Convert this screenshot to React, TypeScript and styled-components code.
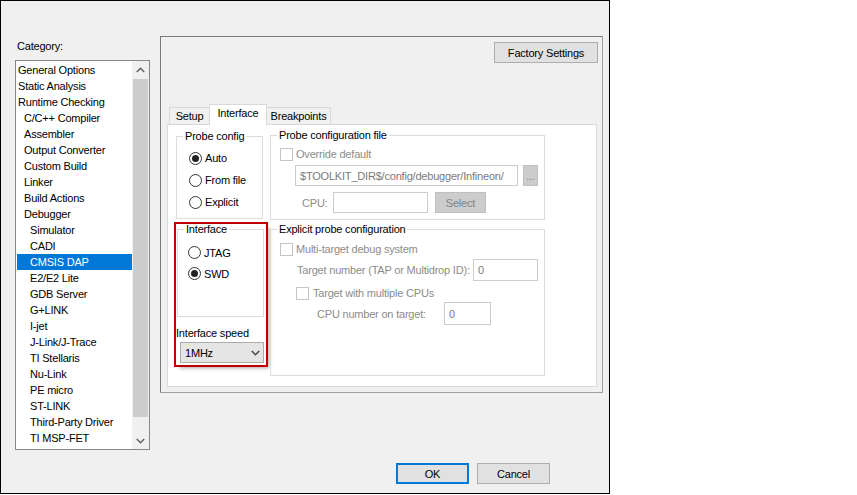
import React from 'react';
import styled, { createGlobalStyle } from 'styled-components';

const GlobalStyle = createGlobalStyle`
  html, body { margin: 0; padding: 0; background: #fff; }
  body {
    font-family: "Liberation Sans", Arial, sans-serif;
    font-size: 11px;
    letter-spacing: -0.2px;
    color: #000;
  }
`;

const Dialog = styled.div`
  width: 610px;
  height: 494px;
  box-sizing: border-box;
  border: 1px solid #000;
  background: #f0f0f0;
  display: flex;
  flex-direction: column;
`;

const TopRow = styled.div`
  display: flex;
  align-items: flex-start;
  gap: 10px;
  padding-left: 14px;
  height: 449px;
`;

const CategoryCol = styled.div`
  margin-top: 37px;
  width: 135px;
  display: flex;
  flex-direction: column;
`;

const CategoryLabel = styled.div`
  line-height: 16px;
  padding-left: 2px;
  margin-bottom: 6px;
`;

const ListBox = styled.div`
  width: 135px;
  height: 390px;
  box-sizing: border-box;
  border: 1px solid #828790;
  background: #fff;
  display: flex;
`;

const Items = styled.ul`
  list-style: none;
  margin: 0;
  padding: 1px 0 0 1px;
  flex: 1;
`;

const Item = styled.li<{ $level: number; $selected?: boolean }>`
  height: 16px;
  line-height: 16px;
  white-space: nowrap;
  padding-left: ${p => 1 + p.$level * 6}px;
  background: ${p => (p.$selected ? '#0078d7' : 'transparent')};
  color: ${p => (p.$selected ? '#fff' : '#000')};
`;

const ScrollBar = styled.div`
  width: 17px;
  background: #f0f0f0;
  display: flex;
  flex-direction: column;
`;

const ScrollArrow = styled.div`
  height: 17px;
  display: flex;
  align-items: center;
  justify-content: center;
`;

const ScrollThumb = styled.div`
  margin: 1px 1px 0;
  height: 338px;
  background: #cdcdcd;
`;

const ScrollTrack = styled.div`
  flex: 1;
`;

const Frame = styled.div`
  margin-top: 35px;
  width: 443px;
  height: 357px;
  box-sizing: border-box;
  border: 1px solid #a0a0a0;
  border-color: #7a7a7a #a0a0a0 #a0a0a0 #7a7a7a;
  display: flex;
  flex-direction: column;
  padding: 5px 4px 0 6px;
`;

const ButtonRow = styled.div`
  display: flex;
  justify-content: flex-end;
`;

const PushButton = styled.button<{ $w: number; $default?: boolean }>`
  width: ${p => p.$w}px;
  height: 21px;
  box-sizing: border-box;
  margin: 0;
  padding: 0;
  background: #e1e1e1;
  border: ${p => (p.$default ? '2px solid #0078d7' : '1px solid #adadad')};
  font-family: "Liberation Sans", Arial, sans-serif;
  font-size: 11px;
  letter-spacing: -0.2px;
  color: #000;
`;

const TabStrip = styled.div`
  margin-top: 41px;
  height: 20px;
  padding-left: 2px;
  display: flex;
  align-items: flex-end;
`;

const Tab = styled.div<{ $w: number; $active?: boolean }>`
  width: ${p => p.$w}px;
  height: ${p => (p.$active ? 21 : 17)}px;
  margin-bottom: ${p => (p.$active ? -1 : 0)}px;
  box-sizing: border-box;
  border: 1px solid #d9d9d9;
  border-bottom: none;
  background: ${p => (p.$active ? '#fff' : '#f0f0f0')};
  position: relative;
  z-index: ${p => (p.$active ? 1 : 0)};
  text-align: center;
  white-space: nowrap;
  line-height: ${p => (p.$active ? 17 : 16)}px;
  & + & { margin-left: -1px; }
`;

const TabPanel = styled.div`
  width: 430px;
  height: 263px;
  box-sizing: border-box;
  border: 1px solid #d9d9d9;
  background: #fff;
  display: grid;
  grid-template-columns: 90px 275px;
  column-gap: 4px;
  align-items: start;
  padding: 3px 0 0 8px;
`;

const Column = styled.div<{ $top?: number }>`
  display: flex;
  flex-direction: column;
  margin-top: ${p => p.$top ?? 0}px;
`;

const Group = styled.fieldset<{ $w: number; $h: number; $top?: number; $left?: number }>`
  margin: ${p => p.$top ?? 0}px 0 0 ${p => p.$left ?? 0}px;
  padding: 0;
  min-width: 0;
  width: ${p => p.$w}px;
  height: ${p => p.$h}px;
  box-sizing: border-box;
  border: 1px solid #dcdcdc;
`;

const Legend = styled.legend`
  margin-left: 6px;
  padding: 0 2px;
  line-height: 14px;
  font-size: 11px;
`;

const GroupBody = styled.div<{ $pt: number; $pl: number }>`
  padding: ${p => p.$pt}px 0 0 ${p => p.$pl}px;
  display: flex;
  flex-direction: column;
`;

const RadioRow = styled.div<{ $h: number }>`
  height: ${p => p.$h}px;
  display: flex;
  align-items: center;
  gap: 3px;
`;

const RadioDot = styled.span<{ $checked?: boolean }>`
  width: 13px;
  height: 13px;
  box-sizing: border-box;
  border: 1px solid #333;
  border-radius: 50%;
  background: #fff;
  display: flex;
  align-items: center;
  justify-content: center;
  &::after {
    content: '';
    width: 7px;
    height: 7px;
    border-radius: 50%;
    background: #222;
    display: ${p => (p.$checked ? 'block' : 'none')};
  }
`;

const Highlight = styled.div`
  margin-top: 5px;
  width: 90px;
  height: 141px;
  outline: 2px solid #c00000;
  box-shadow: 3px 3px 4px rgba(0, 0, 0, 0.35);
  display: flex;
  flex-direction: column;
`;

const FieldLabel = styled.div<{ $top?: number }>`
  margin-top: ${p => p.$top ?? 0}px;
  line-height: 14px;
`;

const Combo = styled.div`
  margin: 2px 0 0 4px;
  width: 84px;
  height: 21px;
  box-sizing: border-box;
  border: 1px solid #acacac;
  background: #e5e5e5;
  display: flex;
  align-items: center;
  justify-content: space-between;
  padding: 0 3px 0 4px;
`;

const CheckRow = styled.div<{ $top?: number; $left?: number; $gap?: number }>`
  margin: ${p => p.$top ?? 0}px 0 0 ${p => p.$left ?? 0}px;
  height: 16px;
  display: flex;
  align-items: center;
  gap: ${p => p.$gap ?? 3}px;
  color: #8c8c8c;
`;

const CheckBox = styled.span`
  width: 13px;
  height: 13px;
  box-sizing: border-box;
  border: 1px solid #c4c4c4;
  background: #fff;
`;

const FormRow = styled.div<{ $top?: number; $left?: number; $gap?: number }>`
  margin: ${p => p.$top ?? 0}px 0 0 ${p => p.$left ?? 0}px;
  display: flex;
  align-items: center;
  gap: ${p => p.$gap ?? 0}px;
`;

const DimLabel = styled.span<{ $w: number }>`
  width: ${p => p.$w}px;
  flex: none;
  white-space: nowrap;
  color: #8c8c8c;
`;

const TextBox = styled.div<{ $w: number; $h?: number }>`
  width: ${p => p.$w}px;
  height: ${p => p.$h ?? 21}px;
  box-sizing: border-box;
  border: 1px solid #cccccc;
  background: #fff;
  padding: 0 0 0 4px;
  display: flex;
  align-items: center;
  white-space: nowrap;
  overflow: hidden;
  color: #7a7a7a;
`;

const DimButton = styled.div<{ $w: number; $gapLeft?: number }>`
  width: ${p => p.$w}px;
  height: 21px;
  margin-left: ${p => p.$gapLeft ?? 0}px;
  box-sizing: border-box;
  border: 1px solid #bfbfbf;
  background: #cccccc;
  color: #838383;
  display: flex;
  align-items: center;
  justify-content: center;
`;

const Ellipsis = styled(DimButton)`
  margin-top: -1px;
  align-items: flex-end;
  padding-bottom: 4px;
  line-height: 10px;
`;

const Footer = styled.div`
  padding: 13px 59px 0 0;
  display: flex;
  justify-content: flex-end;
  gap: 8px;
`;

const Chevron = ({ up, color = '#606060' }: { up?: boolean; color?: string }) => (
  <svg width="9" height="6" viewBox="0 0 9 6">
    <polyline
      points={up ? '0.8,5 4.5,1.3 8.2,5' : '0.8,1 4.5,4.7 8.2,1'}
      fill="none"
      stroke={color}
      strokeWidth="1.5"
    />
  </svg>
);

const categories: [string, number][] = [
  ['General Options', 0],
  ['Static Analysis', 0],
  ['Runtime Checking', 0],
  ['C/C++ Compiler', 1],
  ['Assembler', 1],
  ['Output Converter', 1],
  ['Custom Build', 1],
  ['Linker', 1],
  ['Build Actions', 1],
  ['Debugger', 1],
  ['Simulator', 2],
  ['CADI', 2],
  ['CMSIS DAP', 2],
  ['E2/E2 Lite', 2],
  ['GDB Server', 2],
  ['G+LINK', 2],
  ['I-jet', 2],
  ['J-Link/J-Trace', 2],
  ['TI Stellaris', 2],
  ['Nu-Link', 2],
  ['PE micro', 2],
  ['ST-LINK', 2],
  ['Third-Party Driver', 2],
  ['TI MSP-FET', 2],
];

const Radio = ({ label, checked, h }: { label: string; checked?: boolean; h: number }) => (
  <RadioRow $h={h}>
    <RadioDot $checked={checked} />
    <span>{label}</span>
  </RadioRow>
);

export default function App() {
  return (
    <>
      <GlobalStyle />
      <Dialog>
        <TopRow>
          <CategoryCol>
            <CategoryLabel>Category:</CategoryLabel>
            <ListBox>
              <Items>
                {categories.map(([name, level]) => (
                  <Item key={name} $level={level} $selected={name === 'CMSIS DAP'}>
                    {name}
                  </Item>
                ))}
              </Items>
              <ScrollBar>
                <ScrollArrow><Chevron up /></ScrollArrow>
                <ScrollThumb />
                <ScrollTrack />
                <ScrollArrow><Chevron /></ScrollArrow>
              </ScrollBar>
            </ListBox>
          </CategoryCol>

          <Frame>
            <ButtonRow>
              <PushButton $w={104}>Factory Settings</PushButton>
            </ButtonRow>
            <TabStrip>
              <Tab $w={41}>Setup</Tab>
              <Tab $w={58} $active>Interface</Tab>
              <Tab $w={65}>Breakpoints</Tab>
            </TabStrip>
            <TabPanel>
              <Column $top={1}>
                <Group $w={87} $h={90}>
                  <Legend>Probe config</Legend>
                  <GroupBody $pt={4} $pl={12}>
                    <Radio label="Auto" checked h={22} />
                    <Radio label="From file" h={22} />
                    <Radio label="Explicit" h={22} />
                  </GroupBody>
                </Group>
                <Highlight>
                  <Group $w={87} $h={95} $top={-2} $left={1}>
                    <Legend>Interface</Legend>
                    <GroupBody $pt={6} $pl={10}>
                      <Radio label="JTAG" h={21} />
                      <Radio label="SWD" checked h={21} />
                    </GroupBody>
                  </Group>
                  <FieldLabel $top={9}>Interface speed</FieldLabel>
                  <Combo>
                    <span>1MHz</span>
                    <Chevron color="#444" />
                  </Combo>
                </Highlight>
              </Column>

              <Column>
                <Group $w={275} $h={92}>
                  <Legend>Probe configuration file</Legend>
                  <GroupBody $pt={4} $pl={9}>
                    <CheckRow $gap={3}>
                      <CheckBox />
                      <span>Override default</span>
                    </CheckRow>
                    <FormRow $top={3} $left={15} $gap={5}>
                      <TextBox $w={223}>$TOOLKIT_DIR$/config/debugger/Infineon/</TextBox>
                      <Ellipsis $w={15}>...</Ellipsis>
                    </FormRow>
                    <FormRow $top={6} $left={22}>
                      <DimLabel $w={31}>CPU:</DimLabel>
                      <TextBox $w={95} />
                      <DimButton $w={51} $gapLeft={7}>Select</DimButton>
                    </FormRow>
                  </GroupBody>
                </Group>
                <Group $w={275} $h={154} $top={2}>
                  <Legend>Explicit probe configuration</Legend>
                  <GroupBody $pt={5} $pl={9}>
                    <CheckRow $gap={3}>
                      <CheckBox />
                      <span>Multi-target debug system</span>
                    </CheckRow>
                    <FormRow $top={2} $left={17}>
                      <DimLabel $w={176}>Target number (TAP or Multidrop ID):</DimLabel>
                      <TextBox $w={65} $h={22}>0</TextBox>
                    </FormRow>
                    <CheckRow $top={4} $left={16} $gap={4}>
                      <CheckBox />
                      <span>Target with multiple CPUs</span>
                    </CheckRow>
                    <FormRow $top={1} $left={37}>
                      <DimLabel $w={127}>CPU number on target:</DimLabel>
                      <TextBox $w={47} $h={23}>0</TextBox>
                    </FormRow>
                  </GroupBody>
                </Group>
              </Column>
            </TabPanel>
          </Frame>
        </TopRow>
        <Footer>
          <PushButton $w={73} $default>OK</PushButton>
          <PushButton $w={73}>Cancel</PushButton>
        </Footer>
      </Dialog>
    </>
  );
}
